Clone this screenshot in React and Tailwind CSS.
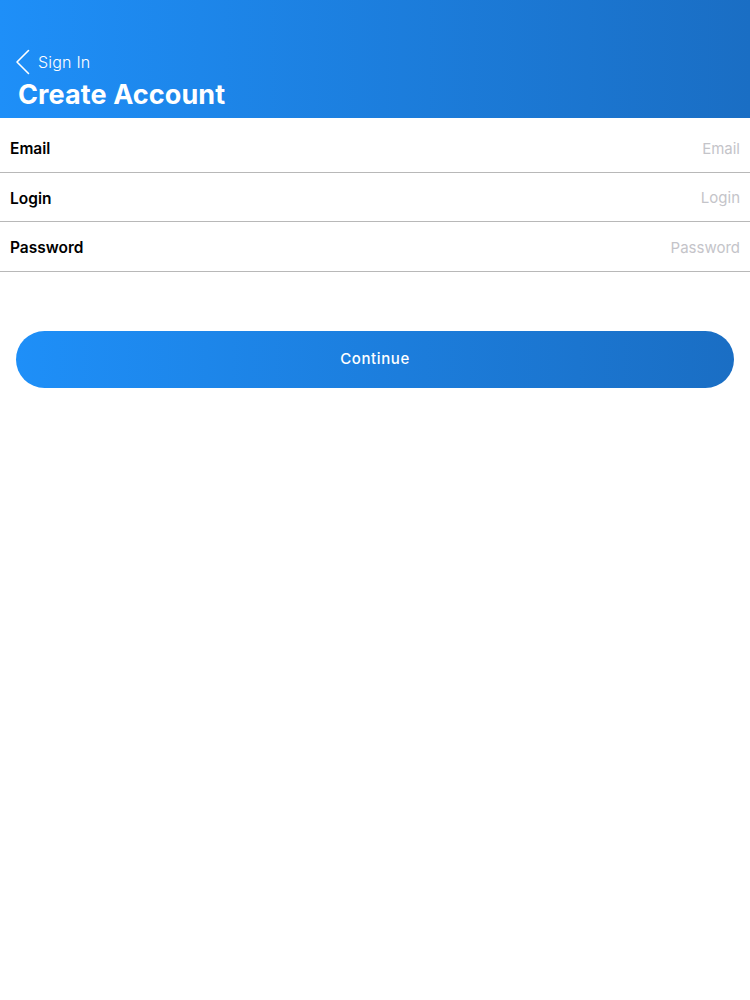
import React from "react";

export default function App() {
  const rows = [
    { label: "Email", ph: "Email" },
    { label: "Login", ph: "Login" },
    { label: "Password", ph: "Password", type: "password" },
  ];
  return (
    <div className="min-h-[1000px] w-[750px] bg-white font-['Inter',sans-serif]">
      <div className="h-[118px] bg-gradient-to-r from-[#1e8ff8] to-[#1a6ec4] flex flex-col justify-end pb-[5px]">
        <div className="flex items-center pl-[15px] h-[26px] mb-[2px]">
          <svg width="16" height="26" viewBox="0 0 16 26" fill="none" className="mr-[7px]">
            <path d="M13.5 1.5 L2 13 L13.5 24.5" stroke="white" strokeWidth="1.6" strokeLinecap="round" strokeLinejoin="round" />
          </svg>
          <span className="text-white text-[16px] font-light tracking-[0.2px]">Sign In</span>
        </div>
        <h1 className="text-white text-[27px] font-bold pl-[18px] leading-[36px] tracking-[0.1px]">Create Account</h1>
      </div>
      <div className="pt-[5px]">
        {rows.map((r) => (
          <div key={r.label} className="flex items-center h-[49.5px] border-b border-[#b8b8b8] px-[10px] pt-[3px]">
            <span className="text-[15.5px] font-semibold text-black">{r.label}</span>
            <input
              type={r.type || "text"}
              placeholder={r.ph}
              className="flex-1 text-right text-[15px] outline-none placeholder:text-[#c4c4c9] pr-0 bg-transparent"
            />
          </div>
        ))}
      </div>
      <div className="px-[16px] pt-[59px]">
        <button className="w-full h-[57px] rounded-full bg-gradient-to-r from-[#1e8ff8] to-[#1a6ec4] text-white text-[15px] font-medium tracking-[0.6px]">
          Continue
        </button>
      </div>
    </div>
  );
}
